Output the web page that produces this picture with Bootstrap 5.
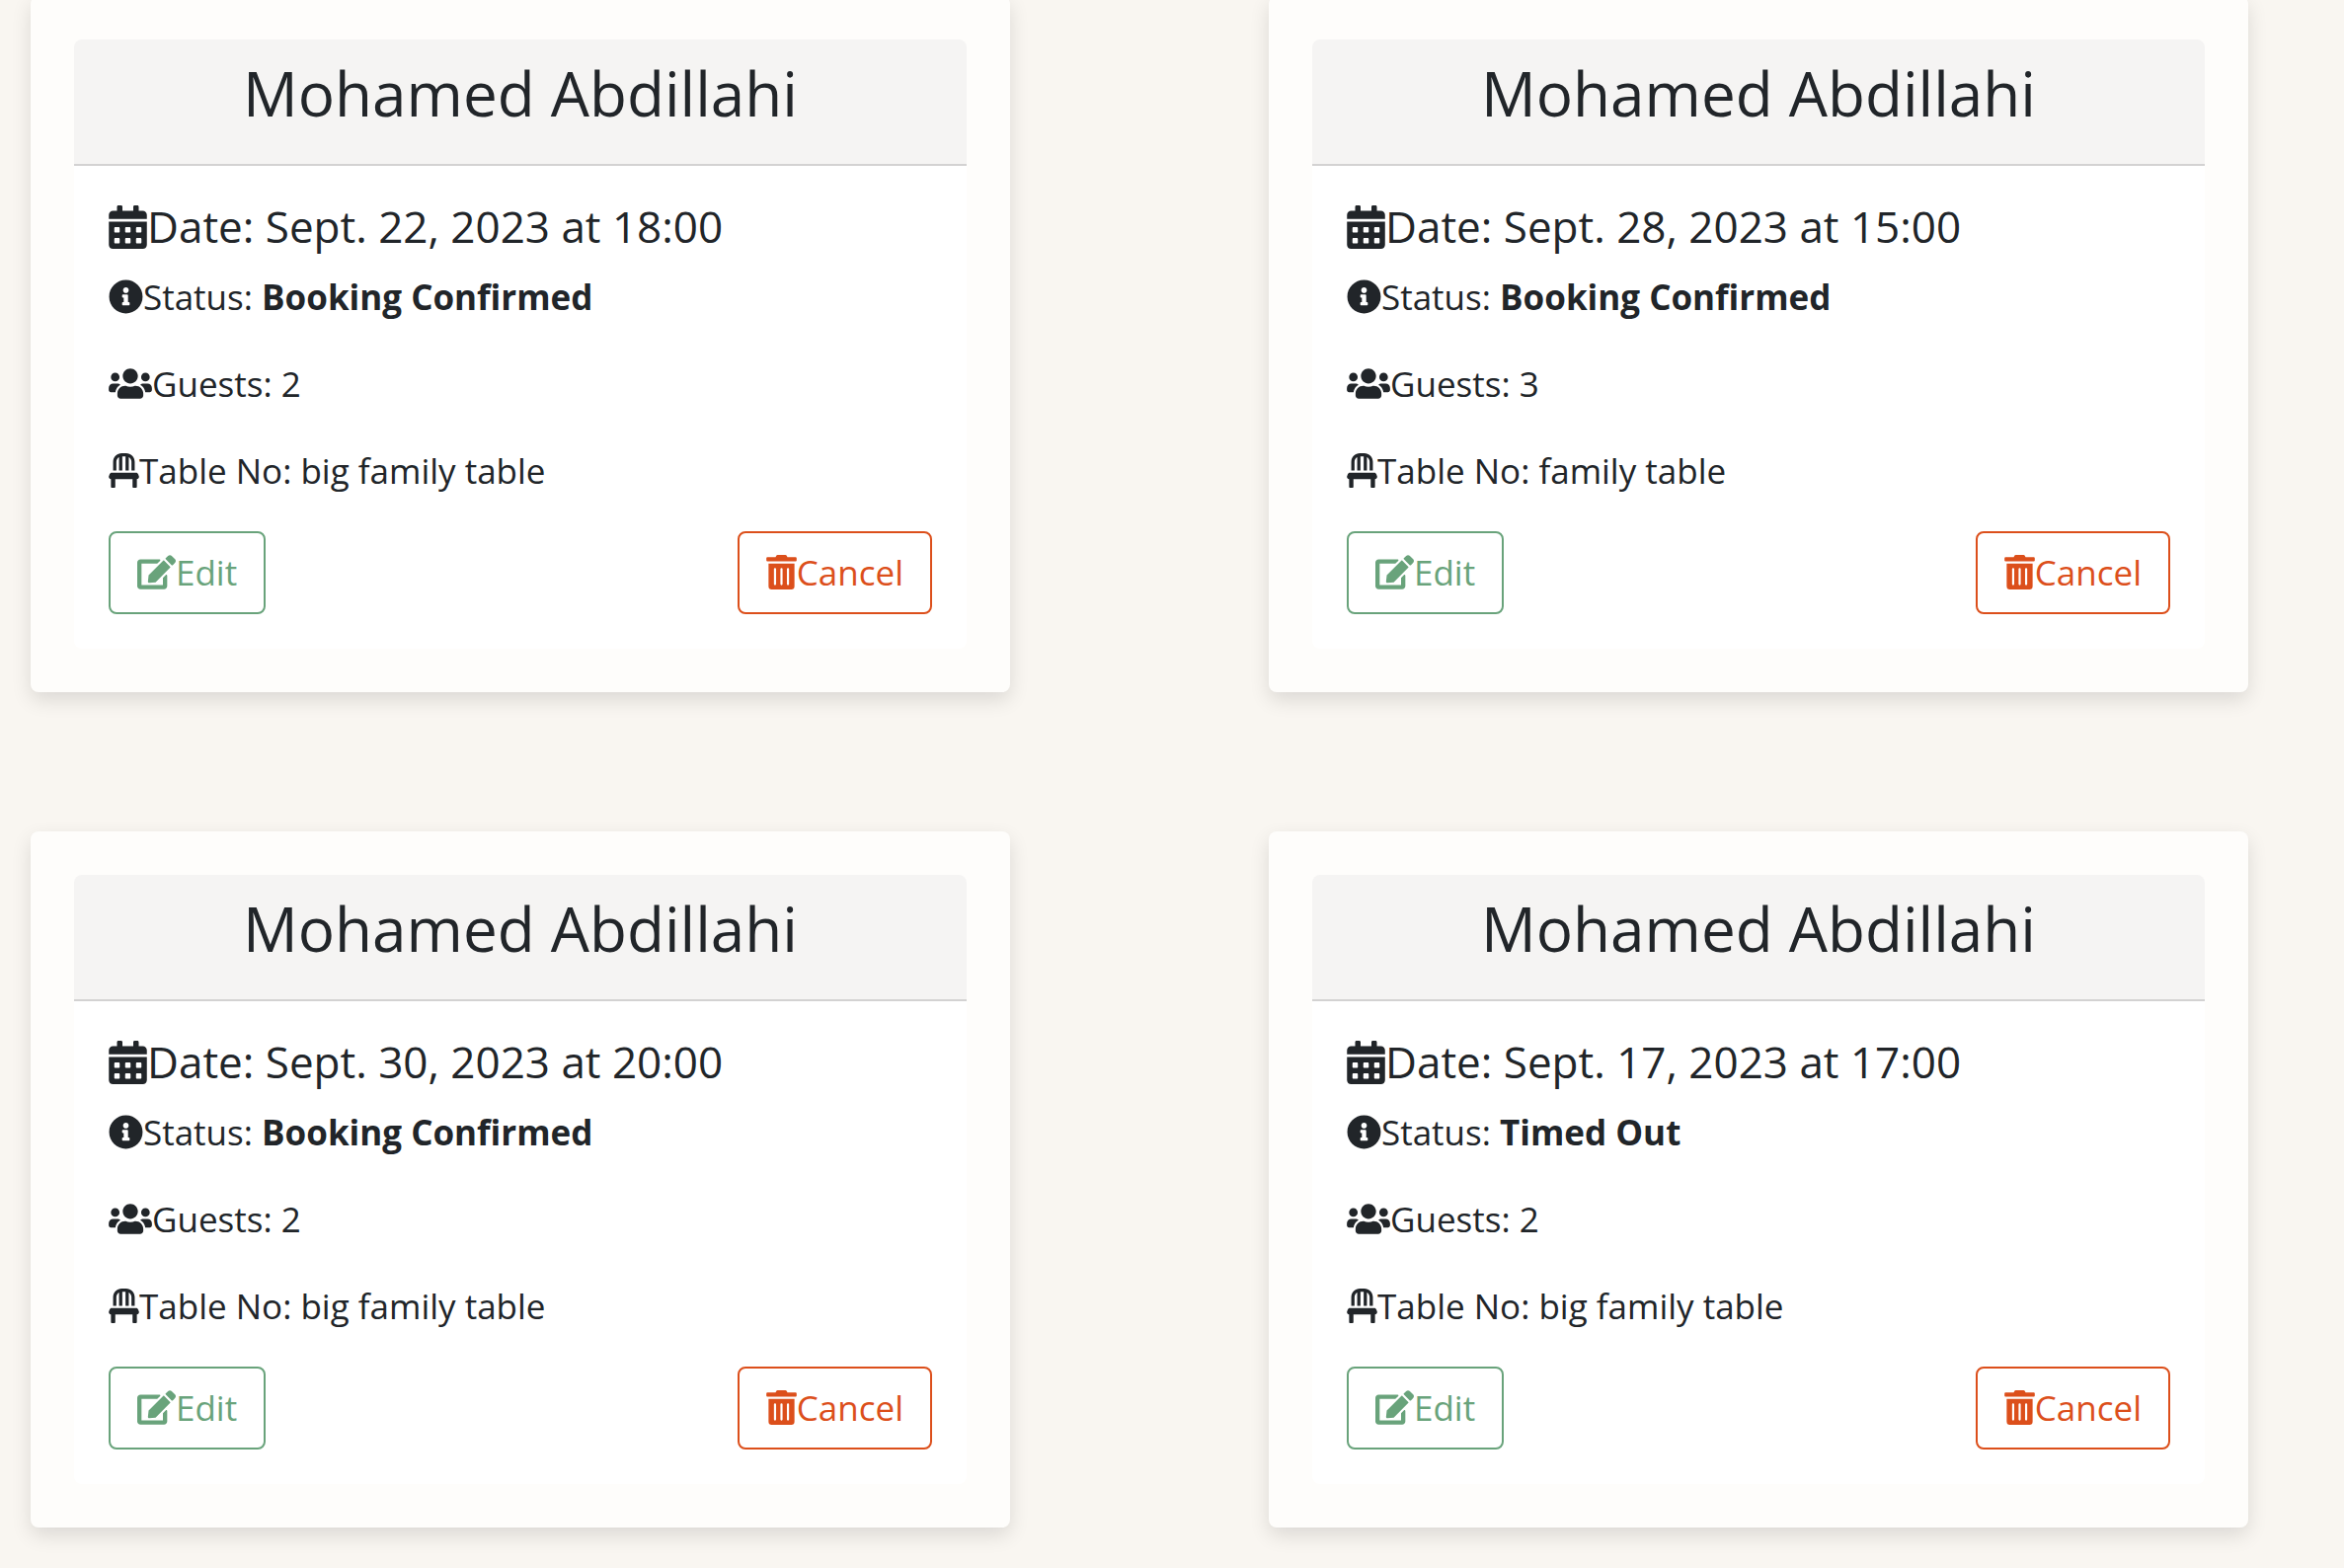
<!DOCTYPE html>
<html lang="en">
<head>
<meta charset="utf-8">
<meta name="viewport" content="width=device-width, initial-scale=1">
<title>My bookings</title>
<link href="https://cdn.jsdelivr.net/npm/bootstrap@5.3.0/dist/css/bootstrap.min.css" rel="stylesheet">
<style>
  body { background: #f9f6f1; color: #212529; font-family: "Open Sans", "Noto Sans", sans-serif; font-size: 35px; line-height: 53px; }
  .booking-list { margin-top: -4px; padding: 0 97px 42px 31px; grid-template-columns: 1fr 1fr; gap: 141px 262px; }
  .booking { background: #fefdfb; border-radius: 8px; padding: 44px; box-shadow: 0 8px 20px rgba(0, 0, 0, .12); }
  .booking .card { --bs-card-border-radius: 8px; --bs-card-inner-border-radius: 8px; }
  .booking .card-header { background: #f5f4f3; border-bottom: 2px solid #d3d2d2; padding: 17px 35px; }
  .booking .card-body { padding: 35px; }
  .guest-name { font-size: 62px; line-height: 74px; margin-bottom: 18px; font-weight: 400; }
  .booking-date { font-size: 44px; line-height: 53px; margin-bottom: 18px; font-weight: 400; }
  .booking p { margin-bottom: 35px; }
  .icon { height: 35px; vertical-align: -4px; fill: currentColor; }
  .icon-date { width: 39px; height: 44px; vertical-align: -6px; }
  .icon-info { width: 35px; }
  .icon-users { width: 44px; }
  .icon-chair, .icon-trash { width: 31px; }
  .icon-edit { width: 39px; }
  .booking .btn { --bs-btn-font-size: 35px; --bs-btn-line-height: 54px; --bs-btn-padding-x: 27px; --bs-btn-padding-y: 13px; --bs-btn-border-width: 2px; --bs-btn-border-radius: 8px; }
  .btn-edit { --bs-btn-color: #69a37b; --bs-btn-border-color: #69a37b; --bs-btn-hover-color: #fff; --bs-btn-hover-bg: #69a37b; --bs-btn-hover-border-color: #69a37b; }
  .btn-cancel { --bs-btn-color: #dc4f1b; --bs-btn-border-color: #dc4f1b; --bs-btn-hover-color: #fff; --bs-btn-hover-bg: #dc4f1b; --bs-btn-hover-border-color: #dc4f1b; }
  @media (max-width: 1700px) { .booking-list { grid-template-columns: 1fr; padding-right: 31px; } }
</style>
</head>
<body>
<svg class="d-none" aria-hidden="true">
  <symbol id="calendar" viewBox="0 0 448 512"><path d="M0 464c0 26.500 21.500 48 48 48h352c26.500 0 48-21.500 48-48V192H0v272zM320 268c0-6.600 5.400-12 12-12h40c6.600 0 12 5.400 12 12v40c0 6.600-5.400 12-12 12h-40c-6.600 0-12-5.400-12-12zM320 396c0-6.600 5.400-12 12-12h40c6.600 0 12 5.400 12 12v40c0 6.600-5.400 12-12 12h-40c-6.600 0-12-5.400-12-12zM192 268c0-6.600 5.400-12 12-12h40c6.600 0 12 5.400 12 12v40c0 6.600-5.400 12-12 12h-40c-6.600 0-12-5.400-12-12zM192 396c0-6.600 5.400-12 12-12h40c6.600 0 12 5.400 12 12v40c0 6.600-5.400 12-12 12h-40c-6.600 0-12-5.400-12-12zM64 268c0-6.600 5.400-12 12-12h40c6.600 0 12 5.400 12 12v40c0 6.600-5.400 12-12 12H76c-6.600 0-12-5.400-12-12zM64 396c0-6.600 5.400-12 12-12h40c6.600 0 12 5.400 12 12v40c0 6.600-5.400 12-12 12H76c-6.600 0-12-5.400-12-12zM400 64h-48V16c0-8.800-7.200-16-16-16h-32c-8.800 0-16 7.200-16 16v48H160V16c0-8.800-7.200-16-16-16h-32c-8.800 0-16 7.200-16 16v48H48C21.500 64 0 85.500 0 112v48h448v-48c0-26.500-21.500-48-48-48z" fill-rule="evenodd"/></symbol>
  <symbol id="info" viewBox="0 0 512 512"><path d="M256 8C119.043 8 8 119.083 8 256c0 136.997 111.043 248 248 248s248-111.003 248-248C504 119.083 392.957 8 256 8zm0 110c23.196 0 42 18.804 42 42s-18.804 42-42 42-42-18.804-42-42 18.804-42 42-42zm56 254c0 6.627-5.373 12-12 12h-88c-6.627 0-12-5.373-12-12v-24c0-6.627 5.373-12 12-12h12v-64h-12c-6.627 0-12-5.373-12-12v-24c0-6.627 5.373-12 12-12h64c6.627 0 12 5.373 12 12v100h12c6.627 0 12 5.373 12 12v24z"/></symbol>
  <symbol id="users" viewBox="0 0 640 512"><path d="M96 224c35.300 0 64-28.700 64-64s-28.700-64-64-64-64 28.700-64 64 28.700 64 64 64zm448 0c35.300 0 64-28.700 64-64s-28.700-64-64-64-64 28.700-64 64 28.700 64 64 64zm32 32h-64c-17.600 0-33.500 7.100-45.100 18.600 40.300 22.100 68.900 62 75.100 109.400h66c17.700 0 32-14.300 32-32v-32c0-35.300-28.700-64-64-64zm-256 0c61.900 0 112-50.100 112-112S381.900 32 320 32 208 82.100 208 144s50.100 112 112 112zm76.800 32h-8.300c-20.800 10-43.900 16-68.500 16s-47.600-6-68.500-16h-8.300C179.600 288 128 339.600 128 403.200V432c0 26.500 21.500 48 48 48h288c26.500 0 48-21.500 48-48v-28.800c0-63.600-51.600-115.200-115.200-115.200zm-223.700-13.400C161.500 263.100 145.600 256 128 256H64c-35.300 0-64 28.700-64 64v32c0 17.700 14.300 32 32 32h65.900c6.300-47.400 34.900-87.300 75.200-109.400z"/></symbol>
  <symbol id="chair" viewBox="0 0 448 512"><path d="M112 128c0-29.500 16.200-55 40-68.900V256h48V48h48v208h48V59.100c23.800 13.900 40 39.400 40 68.900v128h48V128C384 57.300 326.700 0 256 0h-64C121.300 0 64 57.300 64 128v128h48zm334.300 213.900l-10.700-32c-4.400-13.100-16.600-21.900-30.400-21.900H42.700c-13.800 0-26 8.800-30.400 21.900l-10.700 32C-5.200 362.600 10.200 384 32 384v112c0 8.800 7.200 16 16 16h32c8.800 0 16-7.200 16-16V384h256v112c0 8.800 7.200 16 16 16h32c8.800 0 16-7.200 16-16V384c21.800 0 37.200-21.400 30.300-42.100z"/></symbol>
  <symbol id="edit" viewBox="0 0 576 512"><path d="M402.600 83.200l90.200 90.200c3.800 3.800 3.800 10 0 13.800L274.400 405.600l-92.800 10.300c-12.400 1.400-22.900-9.100-21.500-21.500l10.300-92.800L388.800 83.200c3.800-3.800 10-3.800 13.800 0zm162-22.900l-48.800-48.800c-15.200-15.200-39.900-15.200-55.200 0l-35.400 35.400c-3.800 3.800-3.800 10 0 13.800l90.200 90.200c3.800 3.800 10 3.800 13.800 0l35.400-35.400c15.200-15.300 15.200-40 0-55.200zM384 346.200V448H64V128h229.800c3.200 0 6.200-1.300 8.500-3.500l40-40c7.600-7.600 2.200-20.500-8.500-20.500H48C21.500 64 0 85.500 0 112v352c0 26.500 21.500 48 48 48h352c26.500 0 48-21.500 48-48V306.200c0-10.700-12.900-16-20.500-8.500l-40 40c-2.200 2.300-3.500 5.300-3.500 8.500z"/></symbol>
  <symbol id="trash" viewBox="0 0 448 512"><path d="M32 464a48 48 0 0 0 48 48h288a48 48 0 0 0 48-48V128H32zm272-256a16 16 0 0 1 32 0v224a16 16 0 0 1-32 0zm-96 0a16 16 0 0 1 32 0v224a16 16 0 0 1-32 0zm-96 0a16 16 0 0 1 32 0v224a16 16 0 0 1-32 0zM432 32H312l-9.400-18.700A24 24 0 0 0 281.100 0H166.800a23.720 23.720 0 0 0-21.400 13.300L136 32H16A16 16 0 0 0 0 48v32a16 16 0 0 0 16 16h416a16 16 0 0 0 16-16V48a16 16 0 0 0-16-16z"/></symbol>
</svg>

<main class="booking-list d-grid">
  <article class="booking">
    <div class="card border-0">
      <div class="card-header text-center"><h2 class="guest-name">Mohamed Abdillahi</h2></div>
      <div class="card-body">
        <h3 class="booking-date"><svg class="icon icon-date"><use href="#calendar"/></svg>Date: Sept. 22, 2023 at 18:00</h3>
        <p><svg class="icon icon-info"><use href="#info"/></svg>Status: <strong>Booking Confirmed</strong></p>
        <p><svg class="icon icon-users"><use href="#users"/></svg>Guests: 2</p>
        <p><svg class="icon icon-chair"><use href="#chair"/></svg>Table No: big family table</p>
        <div class="d-flex justify-content-between">
          <button type="button" class="btn btn-edit"><svg class="icon icon-edit"><use href="#edit"/></svg>Edit</button>
          <button type="button" class="btn btn-cancel"><svg class="icon icon-trash"><use href="#trash"/></svg>Cancel</button>
        </div>
      </div>
    </div>
  </article>

  <article class="booking">
    <div class="card border-0">
      <div class="card-header text-center"><h2 class="guest-name">Mohamed Abdillahi</h2></div>
      <div class="card-body">
        <h3 class="booking-date"><svg class="icon icon-date"><use href="#calendar"/></svg>Date: Sept. 28, 2023 at 15:00</h3>
        <p><svg class="icon icon-info"><use href="#info"/></svg>Status: <strong>Booking Confirmed</strong></p>
        <p><svg class="icon icon-users"><use href="#users"/></svg>Guests: 3</p>
        <p><svg class="icon icon-chair"><use href="#chair"/></svg>Table No: family table</p>
        <div class="d-flex justify-content-between">
          <button type="button" class="btn btn-edit"><svg class="icon icon-edit"><use href="#edit"/></svg>Edit</button>
          <button type="button" class="btn btn-cancel"><svg class="icon icon-trash"><use href="#trash"/></svg>Cancel</button>
        </div>
      </div>
    </div>
  </article>

  <article class="booking">
    <div class="card border-0">
      <div class="card-header text-center"><h2 class="guest-name">Mohamed Abdillahi</h2></div>
      <div class="card-body">
        <h3 class="booking-date"><svg class="icon icon-date"><use href="#calendar"/></svg>Date: Sept. 30, 2023 at 20:00</h3>
        <p><svg class="icon icon-info"><use href="#info"/></svg>Status: <strong>Booking Confirmed</strong></p>
        <p><svg class="icon icon-users"><use href="#users"/></svg>Guests: 2</p>
        <p><svg class="icon icon-chair"><use href="#chair"/></svg>Table No: big family table</p>
        <div class="d-flex justify-content-between">
          <button type="button" class="btn btn-edit"><svg class="icon icon-edit"><use href="#edit"/></svg>Edit</button>
          <button type="button" class="btn btn-cancel"><svg class="icon icon-trash"><use href="#trash"/></svg>Cancel</button>
        </div>
      </div>
    </div>
  </article>

  <article class="booking">
    <div class="card border-0">
      <div class="card-header text-center"><h2 class="guest-name">Mohamed Abdillahi</h2></div>
      <div class="card-body">
        <h3 class="booking-date"><svg class="icon icon-date"><use href="#calendar"/></svg>Date: Sept. 17, 2023 at 17:00</h3>
        <p><svg class="icon icon-info"><use href="#info"/></svg>Status: <strong>Timed Out</strong></p>
        <p><svg class="icon icon-users"><use href="#users"/></svg>Guests: 2</p>
        <p><svg class="icon icon-chair"><use href="#chair"/></svg>Table No: big family table</p>
        <div class="d-flex justify-content-between">
          <button type="button" class="btn btn-edit"><svg class="icon icon-edit"><use href="#edit"/></svg>Edit</button>
          <button type="button" class="btn btn-cancel"><svg class="icon icon-trash"><use href="#trash"/></svg>Cancel</button>
        </div>
      </div>
    </div>
  </article>
</main>
<script src="https://cdn.jsdelivr.net/npm/bootstrap@5.3.0/dist/js/bootstrap.bundle.min.js"></script>
</body>
</html>
